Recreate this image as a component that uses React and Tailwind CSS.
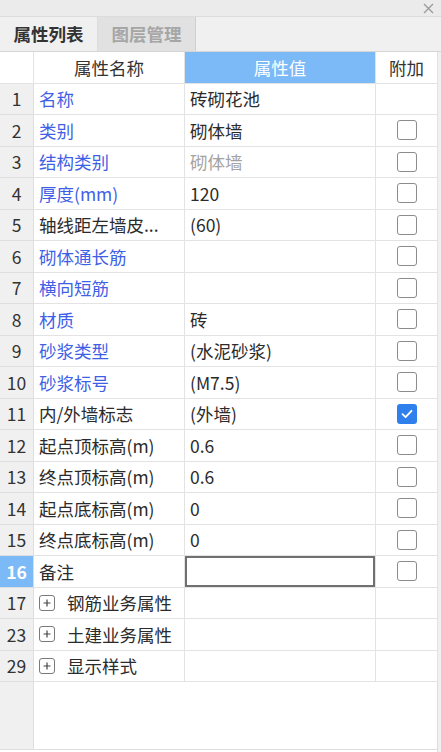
import React from 'react';

const BLUE = 'text-[#3f5fe6]';

const rows = [
  { no: '1', name: '名称', blue: true, value: '砖砌花池', box: null },
  { no: '2', name: '类别', blue: true, value: '砌体墙', box: false },
  { no: '3', name: '结构类别', blue: true, value: '砌体墙', grey: true, box: false },
  { no: '4', name: '厚度(mm)', blue: true, value: '120', box: false },
  { no: '5', name: '轴线距左墙皮...', value: '(60)', box: false },
  { no: '6', name: '砌体通长筋', blue: true, value: '', box: false },
  { no: '7', name: '横向短筋', blue: true, value: '', box: false },
  { no: '8', name: '材质', blue: true, value: '砖', box: false },
  { no: '9', name: '砂浆类型', blue: true, value: '(水泥砂浆)', box: false },
  { no: '10', name: '砂浆标号', blue: true, value: '(M7.5)', box: false },
  { no: '11', name: '内/外墙标志', value: '(外墙)', box: true },
  { no: '12', name: '起点顶标高(m)', value: '0.6', box: false },
  { no: '13', name: '终点顶标高(m)', value: '0.6', box: false },
  { no: '14', name: '起点底标高(m)', value: '0', box: false },
  { no: '15', name: '终点底标高(m)', value: '0', box: false },
  { no: '16', name: '备注', value: '', box: false, editing: true },
  { no: '17', name: '钢筋业务属性', group: true },
  { no: '23', name: '土建业务属性', group: true },
  { no: '29', name: '显示样式', group: true },
];

const Checkbox = ({ checked }) =>
  checked ? (
    <div className="w-[20px] h-[20px] rounded-[3px] bg-[#2f80ed] flex items-center justify-center">
      <svg width="14" height="14" viewBox="0 0 14 14" fill="none">
        <path d="M2.5 7.2 L5.6 10.2 L11.5 3.8" stroke="white" strokeWidth="1.8" strokeLinecap="round" strokeLinejoin="round" />
      </svg>
    </div>
  ) : (
    <div className="w-[20px] h-[20px] rounded-[3px] border-[1.5px] border-[#8c8c8c] bg-white"></div>
  );

const Row = ({ r }) => (
  <div className="grid grid-cols-[34px_151px_191px_62px] h-[31.5px]">
    <div
      className={
        'border-r border-b border-[#dedede] flex items-center justify-center ' +
        (r.editing ? 'bg-[#7cb9f7] text-white font-bold' : 'bg-[#f0f0f0] text-[#333]')
      }
    >
      {r.no}
    </div>
    <div className={'border-r border-b border-[#e3e3e3] bg-white flex items-center pl-[5px] whitespace-nowrap overflow-hidden ' + (r.blue ? BLUE : 'text-[#2b2b2b]')}>
      {r.group ? (
        <>
          <span className="w-[16px] h-[16px] rounded-[3px] border border-[#7a7a7a] flex items-center justify-center mr-[12px] shrink-0">
            <svg width="10" height="10" viewBox="0 0 10 10">
              <path d="M5 1.5 V8.5 M1.5 5 H8.5" stroke="#444" strokeWidth="1.2" />
            </svg>
          </span>
          {r.name}
        </>
      ) : (
        r.name
      )}
    </div>
    <div
      className={
        'border-r border-b border-[#e3e3e3] bg-white flex items-center pl-[5px] ' +
        (r.grey ? 'text-[#a3a3a3] ' : 'text-[#2b2b2b] ') +
        (r.editing ? 'shadow-[inset_0_0_0_2px_#707070]' : '')
      }
    >
      {r.value}
    </div>
    <div className="border-r border-b border-[#e3e3e3] bg-white flex items-center justify-center">
      {!r.group && r.box !== null && r.box !== undefined && <Checkbox checked={r.box} />}
    </div>
  </div>
);

export default function App() {
  return (
    <div
      className="w-[441px] h-[752px] bg-[#f0f0f0] flex flex-col overflow-hidden text-[17.5px] leading-none"
      style={{ fontFamily: '"Noto Sans CJK SC", "Noto Sans", sans-serif' }}
    >
      {/* title strip */}
      <div className="h-[17px] bg-[#ebebeb] border-b border-[#dcdcdc] flex items-center justify-end pr-[7px]">
        <svg width="11" height="11" viewBox="0 0 11 11">
          <path d="M1 1 L10 10 M10 1 L1 10" stroke="#9a9a9a" strokeWidth="1.3" />
        </svg>
      </div>

      {/* tabs */}
      <div className="h-[35px] flex border-b border-[#d6d6d6] bg-[#f0f0f0]">
        <div className="w-[98px] border-r border-[#dcdcdc] bg-[#f0f0f0] flex items-center justify-center font-bold text-[#333]">
          属性列表
        </div>
        <div className="w-[98px] border-r border-[#d0d0d0] bg-[#e1e1e1] flex items-center justify-center font-bold text-[#a6a6a6]">
          图层管理
        </div>
      </div>

      {/* table */}
      <div className="flex-1 flex flex-col w-[438px] border-r border-[#dedede] bg-white">
        <div className="grid grid-cols-[34px_151px_191px_62px] h-[31.5px]">
          <div className="border-r border-b border-[#e3e3e3] bg-white"></div>
          <div className="border-r border-b border-[#e3e3e3] bg-white flex items-center justify-center text-[#333]">属性名称</div>
          <div className="border-r border-b border-[#e3e3e3] bg-[#7cb9f7] flex items-center justify-center text-white">属性值</div>
          <div className="border-r border-b border-[#e3e3e3] bg-white flex items-center justify-center text-[#333]">附加</div>
        </div>
        {rows.map((r) => (
          <Row key={r.no} r={r} />
        ))}
        <div className="flex-1 flex border-b border-[#dedede] mb-[2px]">
          <div className="w-[34px] bg-[#f0f0f0] border-r border-[#dedede]"></div>
          <div className="flex-1 bg-white"></div>
        </div>
      </div>
    </div>
  );
}
